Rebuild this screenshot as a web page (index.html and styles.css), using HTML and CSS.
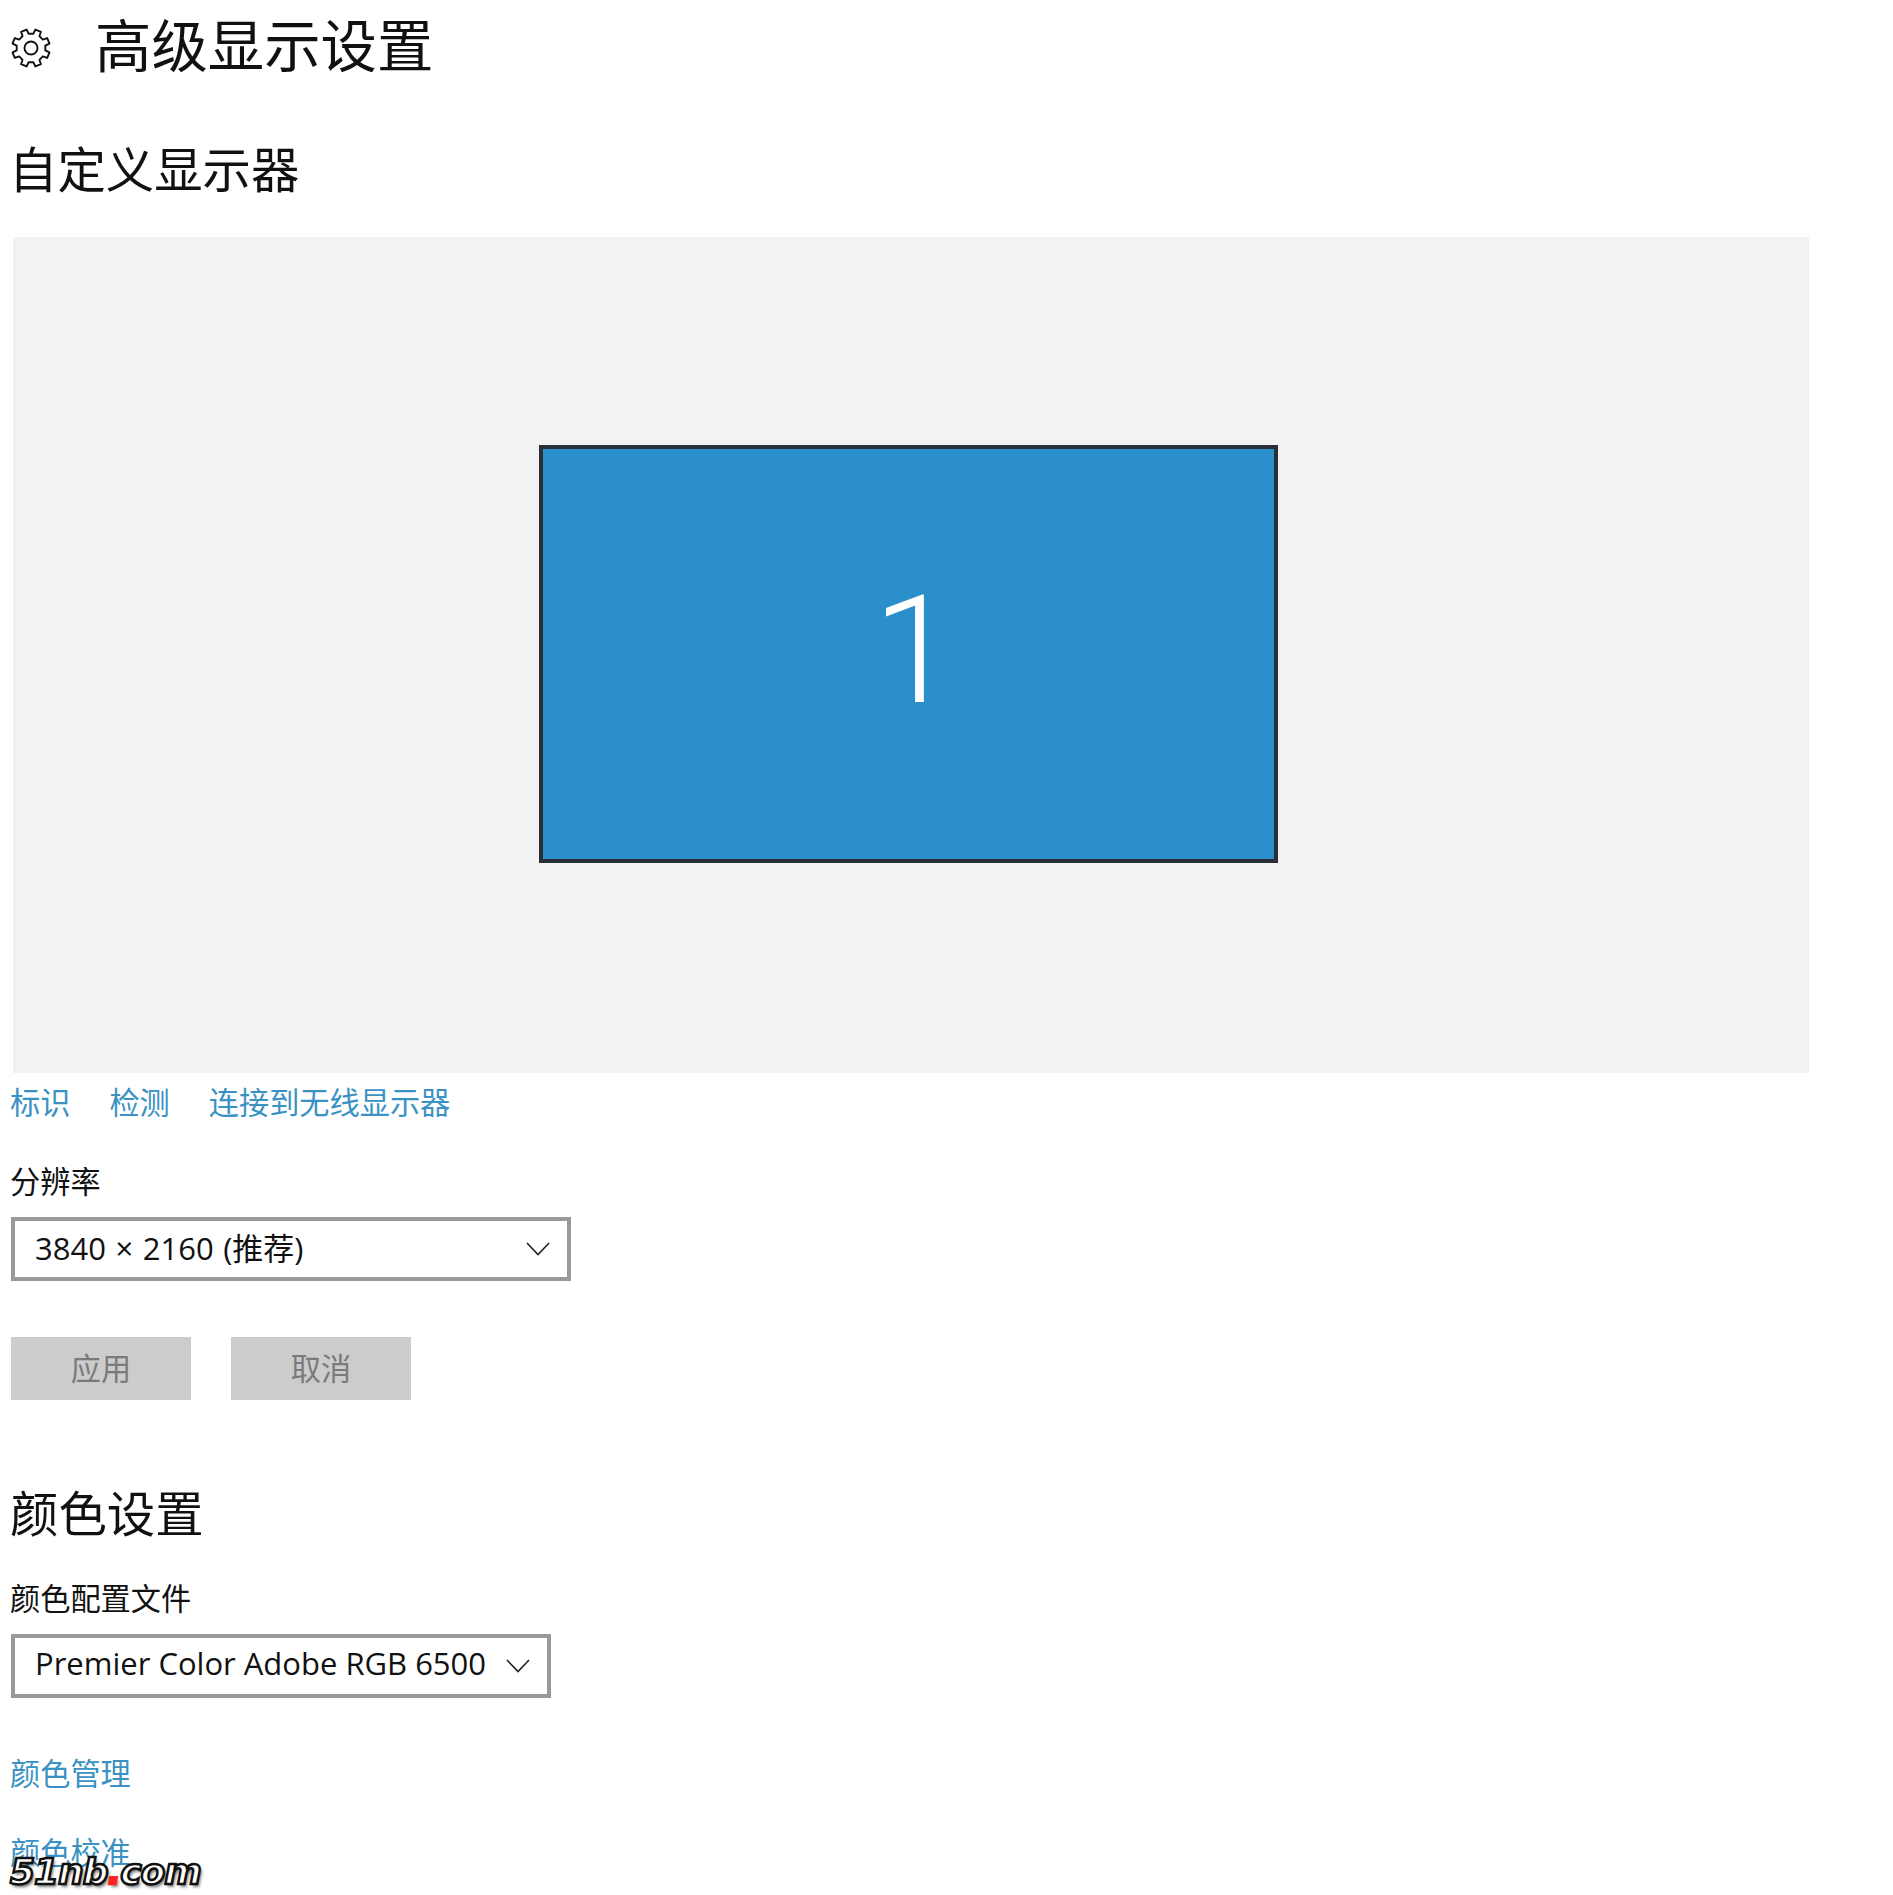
FILE: index.html
```html
<!DOCTYPE html>
<html lang="zh-CN">
<head>
<meta charset="utf-8">
<title>高级显示设置</title>
<link rel="stylesheet" href="styles.css">
</head>
<body>
<main class="page">
  <header class="title-row">
    <svg class="gear" viewBox="-21 -21 42 42" aria-hidden="true">
      <path d="M14.3 2.39L18.48 4.44L16.2 9.93L11.8 8.42L8.42 11.8L9.93 16.2L4.44 18.48L2.39 14.3L-2.39 14.3L-4.44 18.48L-9.93 16.2L-8.42 11.8L-11.8 8.42L-16.2 9.93L-18.48 4.44L-14.3 2.39L-14.3 -2.39L-18.48 -4.44L-16.2 -9.93L-11.8 -8.42L-8.42 -11.8L-9.93 -16.2L-4.44 -18.48L-2.39 -14.3L2.39 -14.3L4.44 -18.48L9.93 -16.2L8.42 -11.8L11.8 -8.42L16.2 -9.93L18.48 -4.44L14.3 -2.39Z"/>
      <circle r="6.5"/>
    </svg>
    <h1 class="title">高级显示设置</h1>
  </header>

  <h2 class="section section-display">自定义显示器</h2>

  <section class="preview">
    <div class="monitor">1</div>
  </section>

  <nav class="links">
    <a class="link">标识</a>
    <a class="link">检测</a>
    <a class="link">连接到无线显示器</a>
  </nav>

  <div class="label label-res">分辨率</div>
  <div class="select select-res">
    <span class="select-text">3840 × 2160 (推荐)</span>
    <svg class="chevron" viewBox="0 0 24 14" aria-hidden="true"><path d="M1 1L12 12.5L23 1"/></svg>
  </div>

  <div class="buttons">
    <button class="btn">应用</button>
    <button class="btn">取消</button>
  </div>

  <h2 class="section section-color">颜色设置</h2>

  <div class="label label-color">颜色配置文件</div>
  <div class="select select-color">
    <span class="select-text">Premier Color Adobe RGB 6500</span>
    <svg class="chevron" viewBox="0 0 24 14" aria-hidden="true"><path d="M1 1L12 12.5L23 1"/></svg>
  </div>

  <a class="link block-link first">颜色管理</a>
  <a class="link block-link second">颜色校准</a>
</main>
<div class="watermark">51nb<span class="dot">.</span>com</div>
</body>
</html>
```
FILE: styles.css
```css
html, body {
  margin: 0;
  padding: 0;
  background: #fff;
}
body {
  position: relative;
  height: 1895px;
  overflow: hidden;
  font-family: "Open Sans", "Noto Sans CJK SC", sans-serif;
  color: #000;
}
.page {
  display: flex;
  flex-direction: column;
  align-items: flex-start;
  padding-left: 10px;
}
.title-row {
  display: flex;
  align-items: center;
  height: 96px;
}
.gear {
  width: 42px;
  height: 42px;
  fill: none;
  stroke: #111;
  stroke-width: 1.9;
  stroke-linejoin: round;
}
.title {
  align-self: flex-start;
  margin: 0 0 0 43px;
  font: 400 56.4px/86px "Noto Sans CJK SC", sans-serif;
  color: #111;
}
.section {
  margin: 0;
  font: 400 48.4px/64px "Noto Sans CJK SC", sans-serif;
  color: #111;
}
.section-display {
  margin-top: 39px;
  margin-left: -1px;
}
.section-color {
  margin-top: 79px;
}
.preview {
  display: flex;
  align-items: center;
  justify-content: center;
  box-sizing: border-box;
  width: 1796px;
  height: 836px;
  margin: 38px 0 0 3px;
  padding: 0 5px 2px 0;
  background: #f2f2f2;
}
.monitor {
  display: flex;
  align-items: center;
  justify-content: center;
  box-sizing: border-box;
  width: 739px;
  height: 418px;
  padding: 0 0 6px 12px;
  border: 4px solid #2a2f35;
  background: #2b8fcb;
  color: #fff;
  font: 300 150px/1 Roboto, sans-serif;
}
.links {
  display: flex;
  gap: 39px;
  margin-top: 8px;
}
.link {
  display: block;
  font: 400 30.2px/40px "Noto Sans CJK SC", sans-serif;
  color: #3a92c4;
}
.label {
  font: 400 30.2px/40px "Noto Sans CJK SC", sans-serif;
  color: #111;
}
.label-res {
  margin-top: 39px;
}
.label-color {
  margin-top: 34px;
}
.select {
  display: flex;
  align-items: center;
  justify-content: space-between;
  box-sizing: border-box;
  height: 64px;
  margin: 17px 0 0 1px;
  padding: 0 17px 0 20px;
  border: 4px solid #999;
  background: #fff;
  font-size: 31px;
  color: #111;
}
.select-text {
  margin-bottom: 6px;
}
.select-res {
  width: 560px;
  word-spacing: 1.5px;
}
.select-color {
  width: 540px;
}
.chevron {
  flex: none;
  width: 24px;
  height: 14px;
  fill: none;
  stroke: #222;
  stroke-width: 1.6;
}
.buttons {
  display: flex;
  gap: 40px;
  margin: 56px 0 0 1px;
}
.btn {
  width: 180px;
  height: 63px;
  padding: 0 0 4px;
  border: 0;
  background: #ccc;
  color: #7a7a7a;
  font: 400 30.2px/40px "Noto Sans CJK SC", sans-serif;
}
.first {
  margin-top: 54px;
}
.second {
  margin-top: 39px;
}
.watermark {
  position: absolute;
  left: 10px;
  top: 1852px;
  font: italic 700 36px/40px "DejaVu Sans", sans-serif;
  color: #fff;
  -webkit-text-stroke: 2.5px #111;
  letter-spacing: -1px;
  text-shadow: 2px 3px 3px rgba(0, 0, 0, .5);
}
.dot {
  color: #f22;
  -webkit-text-stroke: 2.5px #f22;
}
```
